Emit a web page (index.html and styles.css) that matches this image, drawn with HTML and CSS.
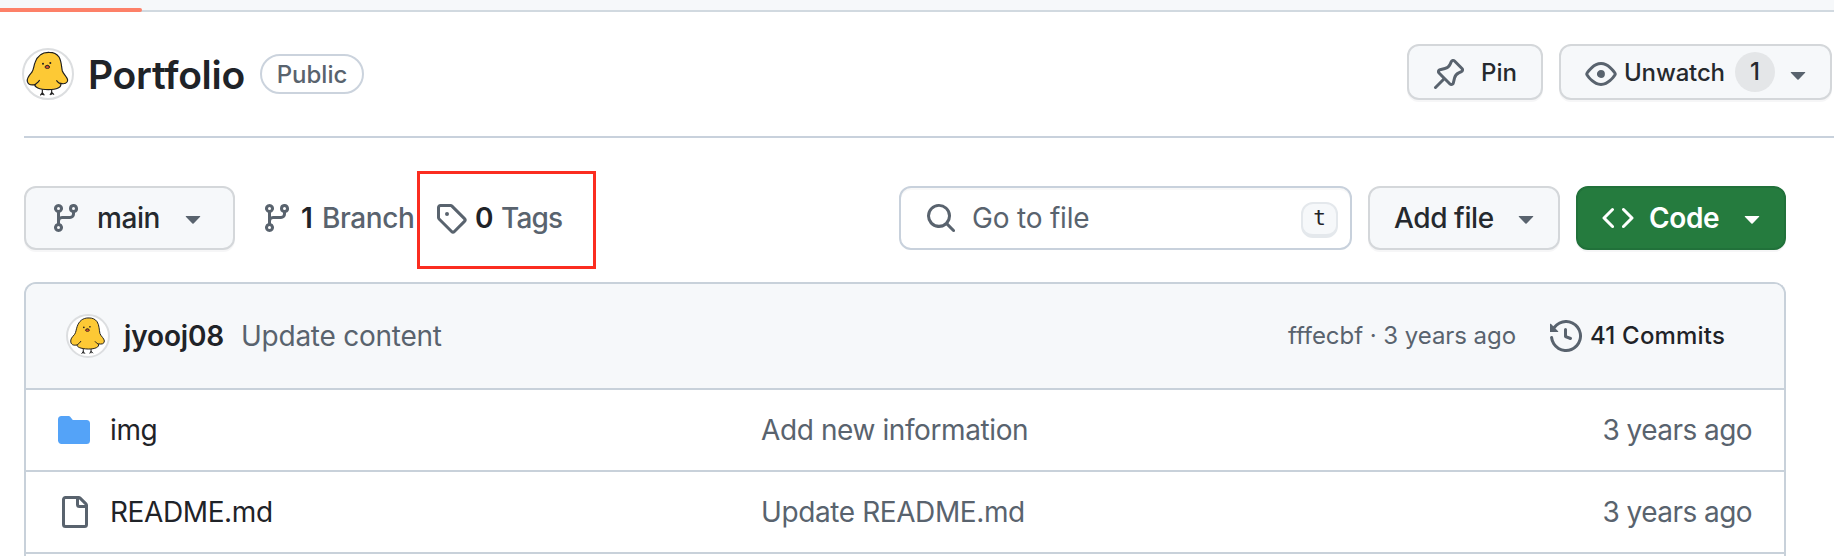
FILE: index.html
```html
<!DOCTYPE html>
<html lang="en">
<head>
  <meta charset="UTF-8" />
  <meta name="viewport" content="width=device-width, initial-scale=1.0"/>
  <title>Portfolio</title>
  <link rel="stylesheet" href="styles.css">
</head>
<body>

  <svg class="sprite" width="0" height="0">
    <symbol id="chick" viewBox="6 6 144 144">
      <path d="M61 124V141M61 134L55 142M61 134L67 142M89 124V140M89 133L84 141M89 133L96 140" fill="none" stroke="#1f1f1f" stroke-width="3.5"/>
      <path d="M82 13C58 12 45 26 39 44C35 55 35 64 30 72C21 82 14 89 16 100C19 112 29 112 39 110C37 117 50 124 79 125C104 125 120 118 116 106C127 109 137 106 137 96C136 86 125 80 121 69C118 57 119 40 111 27C104 17 94 13 82 13Z" fill="#fdc935" stroke="#1f1f1f" stroke-width="3.5"/>
      <path d="M39 110C44 106 50 102 53 96M116 108C110 105 106 101 103 97" fill="none" stroke="#1f1f1f" stroke-width="3.5"/>
      <circle cx="63" cy="47" r="3" fill="#1f1f1f"/>
      <circle cx="85" cy="45" r="3" fill="#1f1f1f"/>
      <ellipse cx="76" cy="57" rx="7" ry="4.5" fill="#e2552c" stroke="#1f1f1f" stroke-width="2.5"/>
      <path d="M70 55Q76 48 82 55" fill="none" stroke="#1f1f1f" stroke-width="2"/>
    </symbol>
    <symbol id="branch" viewBox="0 0 16 16">
      <path d="M9.5 3.25a2.25 2.25 0 1 1 3 2.122V6A2.5 2.5 0 0 1 10 8.5H6a1 1 0 0 0-1 1v1.128a2.251 2.251 0 1 1-1.5 0V5.372a2.25 2.25 0 1 1 1.5 0v1.836A2.493 2.493 0 0 1 6 7h4a1 1 0 0 0 1-1v-.628A2.25 2.25 0 0 1 9.5 3.25Zm-6 0a.75.75 0 1 0 1.5 0 .75.75 0 0 0-1.5 0Zm8.25-.75a.75.75 0 1 0 0 1.5.75.75 0 0 0 0-1.5ZM4.25 12a.75.75 0 1 0 0 1.5.75.75 0 0 0 0-1.5Z"/>
    </symbol>
    <symbol id="caret" viewBox="0 0 16 16">
      <path d="m4.427 7.427 3.396 3.396a.25.25 0 0 0 .354 0l3.396-3.396A.25.25 0 0 0 11.396 7H4.604a.25.25 0 0 0-.177.427Z"/>
    </symbol>
  </svg>

  <div class="tabs"><div class="tab-active"></div></div>

  <header class="repo-header">
    <svg class="avatar"><use href="#chick"/></svg>
    <h1>Portfolio</h1>
    <span class="label">Public</span>
    <div class="repo-actions">
      <button class="btn btn-small btn-pin">
        <svg class="icon" viewBox="0 0 16 16"><path d="m11.294.984 3.722 3.722a1.75 1.75 0 0 1-.504 2.826l-1.327.613a3.089 3.089 0 0 0-1.707 2.084l-.584 2.454c-.317 1.332-1.972 1.8-2.94.832L5.75 11.311 1.78 15.28a.749.749 0 1 1-1.06-1.06l3.969-3.97-2.204-2.204c-.968-.968-.5-2.623.832-2.94l2.454-.584a3.08 3.08 0 0 0 2.084-1.707l.613-1.327a1.75 1.75 0 0 1 2.826-.504ZM6.283 9.723l2.732 2.731a.25.25 0 0 0 .42-.119l.584-2.454a4.586 4.586 0 0 1 2.537-3.098l1.328-.613a.25.25 0 0 0 .072-.404l-3.722-3.722a.25.25 0 0 0-.404.072l-.613 1.328a4.584 4.584 0 0 1-3.098 2.537l-2.454.584a.25.25 0 0 0-.119.42l2.731 2.732Z"/></svg>
        <span>Pin</span>
      </button>
      <button class="btn btn-small btn-watch">
        <svg class="icon" viewBox="0 0 16 16"><path d="M8 2c1.981 0 3.671.992 4.933 2.078 1.27 1.091 2.187 2.345 2.637 3.023a1.62 1.62 0 0 1 0 1.798c-.45.678-1.367 1.932-2.637 3.023C11.67 13.008 9.981 14 8 14c-1.981 0-3.671-.992-4.933-2.078C1.797 10.83.88 9.576.43 8.898a1.62 1.62 0 0 1 0-1.798c.45-.677 1.367-1.931 2.637-3.022C4.33 2.992 6.019 2 8 2ZM1.679 7.932a.12.12 0 0 0 0 .136c.411.622 1.241 1.75 2.366 2.717C5.176 11.758 6.527 12.5 8 12.5c1.473 0 2.825-.742 3.955-1.715 1.124-.967 1.954-2.096 2.366-2.717a.12.12 0 0 0 0-.136c-.412-.621-1.242-1.75-2.366-2.717C10.824 4.242 9.473 3.5 8 3.5c-1.473 0-2.825.742-3.955 1.715-1.124.967-1.954 2.096-2.366 2.717ZM8 10a2 2 0 1 1-.001-3.999A2 2 0 0 1 8 10Z"/></svg>
        <span class="watch-text">Unwatch</span>
        <span class="counter">1</span>
        <svg class="icon"><use href="#caret"/></svg>
      </button>
    </div>
  </header>

  <main class="content">
    <div class="toolbar">
      <button class="btn btn-main">
        <svg class="icon"><use href="#branch"/></svg>
        <span class="main-text">main</span>
        <svg class="icon"><use href="#caret"/></svg>
      </button>
      <a class="ref-link link-branch">
        <svg class="icon"><use href="#branch"/></svg>
        <strong>1</strong><span>Branch</span>
      </a>
      <a class="ref-link link-tags">
        <svg class="icon" viewBox="0 0 16 16"><path d="M1 7.775V2.75C1 1.784 1.784 1 2.75 1h5.025c.464 0 .91.184 1.238.513l6.25 6.25a1.75 1.75 0 0 1 0 2.474l-5.026 5.026a1.75 1.75 0 0 1-2.474 0l-6.25-6.25A1.752 1.752 0 0 1 1 7.775Zm1.5 0c0 .066.026.13.073.177l6.25 6.25a.25.25 0 0 0 .354 0l5.025-5.025a.25.25 0 0 0 0-.354l-6.25-6.25a.25.25 0 0 0-.177-.073H2.75a.25.25 0 0 0-.25.25ZM6 5a1 1 0 1 1 0 2 1 1 0 0 1 0-2Z"/></svg>
        <strong>0</strong><span>Tags</span>
      </a>

      <div class="search">
        <svg class="icon" viewBox="0 0 16 16"><path d="M10.68 11.74a6 6 0 0 1-7.922-8.982 6 6 0 0 1 8.982 7.922l3.04 3.04a.749.749 0 0 1-.326 1.275.749.749 0 0 1-.734-.215ZM11.5 7a4.499 4.499 0 1 0-8.997 0A4.499 4.499 0 0 0 11.5 7Z"/></svg>
        <span class="search-text">Go to file</span>
        <kbd>t</kbd>
      </div>
      <button class="btn btn-add">
        <span>Add file</span>
        <svg class="icon"><use href="#caret"/></svg>
      </button>
      <button class="btn btn-code">
        <svg class="icon" viewBox="0 0 16 16"><path d="m11.28 3.22 4.25 4.25a.75.75 0 0 1 0 1.06l-4.25 4.25a.749.749 0 0 1-1.275-.326.749.749 0 0 1 .215-.734L13.94 8l-3.72-3.72a.749.749 0 0 1 .326-1.275.749.749 0 0 1 .734.215Zm-6.56 0a.751.751 0 0 1 1.042.018.751.751 0 0 1 .018 1.042L2.06 8l3.72 3.72a.749.749 0 0 1-.326 1.275.749.749 0 0 1-.734-.215L.47 8.53a.75.75 0 0 1 0-1.06Z"/></svg>
        <span class="code-text">Code</span>
        <svg class="icon"><use href="#caret"/></svg>
      </button>
    </div>

    <div class="files">
      <div class="commit-bar">
        <svg class="avatar avatar-small"><use href="#chick"/></svg>
        <strong class="author">jyooj08</strong>
        <span class="commit-msg">Update content</span>
        <span class="commit-meta">fffecbf · 3 years ago</span>
        <svg class="icon" viewBox="0 0 16 16"><path d="m.427 1.927 1.215 1.215a8.002 8.002 0 1 1-1.6 5.685.75.75 0 1 1 1.493-.154 6.5 6.5 0 1 0 1.18-4.458l1.358 1.358A.25.25 0 0 1 3.896 6H.25A.25.25 0 0 1 0 5.75V2.104a.25.25 0 0 1 .427-.177ZM7.75 4a.75.75 0 0 1 .75.75v2.992l2.028.812a.75.75 0 0 1-.557 1.392l-2.5-1A.751.751 0 0 1 7 8.25v-3.5A.75.75 0 0 1 7.75 4Z"/></svg>
        <span class="commit-count">41 Commits</span>
      </div>
      <div class="file-row">
        <svg class="icon folder" viewBox="0 0 16 16"><path d="M1.75 1A1.75 1.75 0 0 0 0 2.75v10.5C0 14.216.784 15 1.75 15h12.5A1.75 1.75 0 0 0 16 13.25v-8.5A1.75 1.75 0 0 0 14.25 3H7.5a.25.25 0 0 1-.2-.1l-.9-1.2C6.07 1.26 5.55 1 5 1H1.75Z"/></svg>
        <span class="file-name">img</span>
        <span class="file-msg">Add new information</span>
        <span class="file-age">3 years ago</span>
      </div>
      <div class="file-row">
        <svg class="icon" viewBox="0 0 16 16"><path d="M2 1.75C2 .784 2.784 0 3.75 0h6.586c.464 0 .909.184 1.237.513l2.914 2.914c.329.328.513.773.513 1.237v9.586A1.75 1.75 0 0 1 13.25 16h-9.5A1.75 1.75 0 0 1 2 14.25Zm1.75-.25a.25.25 0 0 0-.25.25v12.5c0 .138.112.25.25.25h9.5a.25.25 0 0 0 .25-.25V6h-2.75A1.75 1.75 0 0 1 9 4.25V1.5Zm6.75.062V4.25c0 .138.112.25.25.25h2.688l-.011-.013-2.914-2.914-.013-.011Z"/></svg>
        <span class="file-name">README.md</span>
        <span class="file-msg">Update README.md</span>
        <span class="file-age">3 years ago</span>
      </div>
      <div class="file-row file-row-cut"></div>
    </div>
  </main>

</body>
</html>
```
FILE: styles.css
```css
* {
  box-sizing: border-box;
}

body {
  margin: 0;
  height: 556px;
  overflow: hidden;
  background: #fff;
  color: #1f2328;
  font-family: Inter, "Liberation Sans", sans-serif;
  font-size: 28px;
  line-height: 40px;
  white-space: nowrap;
}

.sprite {
  display: block;
}

.icon {
  width: 32px;
  height: 32px;
  flex: none;
  fill: #59636e;
}

.tabs {
  height: 12px;
  background: #f6f8fa;
  border-bottom: 2px solid #d1d9e0;
  padding-top: 8px;
}

.tab-active {
  width: 142px;
  height: 4px;
  background: #fd8068;
  border-radius: 0 2px 2px 0;
}

/* title row */
.repo-header {
  display: flex;
  align-items: center;
  height: 126px;
  margin-left: 24px;
  border-bottom: 2px solid #c8d1dc;
}

.avatar {
  width: 52px;
  height: 52px;
  flex: none;
  margin-left: -2px;
  border: 2px solid #dcdee0;
  border-radius: 50%;
  background: #fff;
}

h1 {
  width: 172px;
  margin: 2px 0 0 14px;
  font-size: 39px;
  font-weight: 600;
  letter-spacing: -0.3px;
}

.label {
  width: 104px;
  height: 40px;
  border: 2px solid #cbd3dd;
  border-radius: 20px;
  color: #59636e;
  font-size: 24px;
  font-weight: 500;
  line-height: 37px;
  text-align: center;
}

.repo-actions {
  display: flex;
  gap: 16px;
  margin-left: auto;
  margin-right: 2px;
  padding-bottom: 4px;
}

.btn {
  display: flex;
  align-items: center;
  height: 64px;
  padding: 0 0 0 24px;
  border: 2px solid #d4d7da;
  border-radius: 12px;
  background: #f6f8fa;
  box-shadow: 0 2px 0 rgba(31, 35, 40, 0.04);
  color: #25292e;
  font-family: inherit;
  font-size: 28px;
  font-weight: 500;
  letter-spacing: -0.4px;
  text-align: left;
}

.btn-small {
  height: 56px;
  font-size: 24px;
  letter-spacing: 0;
}

.btn-small .icon {
  margin-top: 3px;
}

.btn-pin {
  width: 136px;
  gap: 16px;
}

.btn-watch {
  width: 273px;
}

.watch-text {
  width: 111px;
  margin-left: 7px;
  letter-spacing: -0.15px;
}

.counter {
  width: 40px;
  height: 40px;
  margin-right: 7px;
  border-radius: 50%;
  background: #e4e6e8;
  text-align: center;
  line-height: 40px;
}

/* branch picker, search and buttons */
.content {
  width: 1762px;
  margin-left: 24px;
  padding-top: 48px;
}

.toolbar {
  display: flex;
  align-items: center;
  height: 64px;
  margin-bottom: 32px;
}

.btn-main {
  width: 211px;
}

.main-text {
  width: 80px;
  margin-left: 15px;
}

.ref-link {
  display: flex;
  align-items: center;
  color: #59636e;
  font-weight: 500;
  letter-spacing: -0.4px;
}

.ref-link strong {
  color: #1f2328;
  font-weight: 600;
}

.link-branch {
  width: 156px;
  margin-left: 26px;
}

.link-branch strong {
  width: 21px;
  margin-left: 8px;
}

.link-tags {
  width: 179px;
  height: 98px;
  margin-top: 4px;
  padding: 0 0 4px 15px;
  border: 3px solid #fb2d20;
}

.link-tags strong {
  width: 26px;
  margin-left: 8px;
}

.link-tags span {
  letter-spacing: -0.8px;
}

.search {
  display: flex;
  align-items: center;
  width: 453px;
  height: 64px;
  margin-left: auto;
  margin-right: 16px;
  padding: 0 12px 0 24px;
  border: 2px solid #c8d1dc;
  border-radius: 12px;
  box-shadow: inset 0 2px 0 rgba(31, 35, 40, 0.03);
}

.search-text {
  margin-left: 15px;
  color: #59636e;
  letter-spacing: -0.2px;
}

kbd {
  width: 37px;
  height: 36px;
  margin-left: auto;
  margin-top: 4px;
  border: 2px solid #e4e8ec;
  border-bottom-width: 4px;
  border-radius: 12px;
  background: #f6f8fa;
  font-family: "DejaVu Sans Mono", monospace;
  font-size: 21px;
  line-height: 29px;
  text-align: center;
}

.btn-add {
  width: 192px;
  margin-right: 16px;
}

.btn-add span {
  width: 116px;
}

.btn-code {
  width: 210px;
  border-color: #21713a;
  background: #257b3e;
  color: #fff;
  font-weight: 600;
}

.btn-code .icon {
  fill: #fff;
}

.code-text {
  width: 87px;
  margin-left: 15px;
}

/* file list */
.files {
  border: 2px solid #c8d1da;
  border-bottom: 0;
  border-radius: 12px 12px 0 0;
  overflow: hidden;
}

.commit-bar {
  display: flex;
  align-items: center;
  height: 104px;
  padding: 0 57px 0 40px;
  background: #f6f8fa;
}

.avatar-small {
  width: 44px;
  height: 44px;
  margin-left: 0;
}

.author {
  width: 117px;
  margin-left: 14px;
  font-weight: 600;
  letter-spacing: -0.15px;
}

.commit-meta {
  width: 230px;
  margin-left: auto;
  margin-right: 32px;
  color: #59636e;
  font-size: 24px;
  letter-spacing: -0.05px;
}

.commit-msg {
  color: #59636e;
  letter-spacing: -0.25px;
}

.commit-count {
  width: 137px;
  margin-left: 8px;
  font-size: 24px;
  font-weight: 500;
  letter-spacing: 0.2px;
}

.file-row {
  display: flex;
  align-items: center;
  height: 82px;
  padding: 0 32px;
  border-top: 2px solid #c8d1da;
  letter-spacing: -0.4px;
}

.file-row-cut {
  height: 4px;
}

.folder {
  fill: #54a3f8;
}

.file-name {
  width: 651px;
  margin-left: 20px;
}

.file-msg,
.file-age {
  color: #59636e;
}

.file-age {
  margin-left: auto;
  letter-spacing: -0.55px;
}
```
